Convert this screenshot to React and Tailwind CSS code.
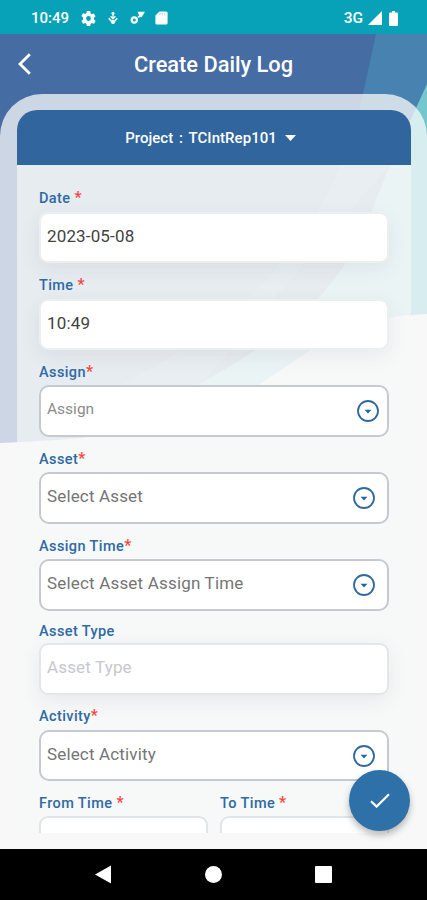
import React, { useState } from 'react';

const FIELDS = [
  {
    label: 'Date',
    required: true,
    spaced: true,
    value: '2023-05-08',
    kind: 'input',
    wrap: 'h-[87px]',
    labelBox: 'h-6',
    box: 'h-[51px] border-[#eceff0]',
    text: 'text-[17px] tracking-[0.15px] text-[#424242]',
  },
  {
    label: 'Time',
    required: true,
    spaced: true,
    value: '10:49',
    kind: 'input',
    wrap: 'h-[87px]',
    labelBox: 'h-6',
    box: 'h-[51px] border-[#eceff0]',
    text: 'text-[17px] tracking-[0.15px] text-[#424242]',
  },
  {
    label: 'Assign',
    required: true,
    value: 'Assign',
    kind: 'select',
    wrap: 'h-[87px]',
    labelBox: 'h-[23px]',
    box: 'h-[52px] pr-[8px]',
    text: 'text-[15.5px] text-[#8c8c8c]',
  },
  {
    label: 'Asset',
    required: true,
    value: 'Select Asset',
    kind: 'select',
    wrap: 'h-[87px]',
    labelBox: 'h-[23px]',
    box: 'h-[52px] pr-[12px]',
    text: 'text-[17px] tracking-[0.15px] text-[#757575]',
  },
  {
    label: 'Assign Time',
    required: true,
    value: 'Select Asset Assign Time',
    kind: 'select',
    wrap: 'h-[85px]',
    labelBox: 'h-[23px]',
    box: 'h-[52px] pr-[12px]',
    text: 'text-[17px] tracking-[0.18px] text-[#757575]',
  },
  {
    label: 'Asset Type',
    value: 'Asset Type',
    kind: 'input',
    wrap: 'h-[85px]',
    labelBox: 'h-[22px]',
    box: 'h-[52px] border-[#e4e7e9]',
    text: 'text-[17px] tracking-[0.15px] text-[#c6c8cc]',
  },
  {
    label: 'Activity',
    required: true,
    value: 'Select Activity',
    kind: 'select',
    wrap: 'h-[87px]',
    labelBox: 'h-[24px]',
    box: 'h-[51px] pr-[12px]',
    text: 'text-[17px] tracking-[0.15px] text-[#757575]',
  },
];

function StatusBar() {
  return (
    <div className="h-[34px] shrink-0 bg-[#07a2b8] flex items-center justify-between pl-[31px] pr-[29px] pt-[2px] text-white">
      <div className="flex items-center">
        <span className="w-[50px] text-[15px] leading-5 font-medium">10:49</span>
        <svg className="w-[15px] h-[15px]" viewBox="2 2 20 20" fill="currentColor" aria-hidden="true">
          <path d="M19.14 12.94c.04-.3.06-.61.06-.94s-.02-.64-.07-.94l2.03-1.58a.49.49 0 0 0 .12-.61l-1.92-3.32a.49.49 0 0 0-.59-.22l-2.39.96a7 7 0 0 0-1.62-.94l-.36-2.54A.48.48 0 0 0 13.92 2h-3.84a.48.48 0 0 0-.47.41l-.36 2.54a7.4 7.4 0 0 0-1.62.94l-2.39-.96a.48.48 0 0 0-.59.22L2.74 8.47a.48.48 0 0 0 .12.61l2.03 1.58a7.4 7.4 0 0 0 0 2.68l-2.03 1.58a.49.49 0 0 0-.12.61l1.92 3.32c.12.22.37.29.59.22l2.39-.96c.5.38 1.03.7 1.62.94l.36 2.54c.05.24.24.41.48.41h3.84c.24 0 .44-.17.47-.41l.36-2.54a7 7 0 0 0 1.62-.94l2.39.96c.22.08.47 0 .59-.22l1.92-3.32a.48.48 0 0 0-.12-.61zM12 15.2a3.2 3.2 0 1 1 0-6.4 3.2 3.2 0 0 1 0 6.4z" />
        </svg>
        <svg className="ml-[11px] w-[12px] h-[14px]" viewBox="0 0 12 14" fill="none" stroke="currentColor" strokeWidth="1.3" aria-hidden="true">
          <circle cx="6" cy="2.2" r="1.5" fill="currentColor" stroke="none" />
          <path d="M6 2v6M3.6 5.2 6 7.8l2.4-2.6" />
          <path d="M1.8 7.2 6 12l4.2-4.8" strokeWidth="1.6" />
          <circle cx="6" cy="11" r="2" fill="currentColor" stroke="none" />
        </svg>
        <svg className="ml-[11px] w-[15px] h-[14px]" viewBox="0 0 15 14" fill="currentColor" aria-hidden="true">
          <circle cx="4.3" cy="9" r="2.6" fill="none" stroke="currentColor" strokeWidth="2.2" />
          <path d="M7.6.8H15l-3.6 5.6-1.7-.9z" />
          <path d="m7.6 5.8 1.8-1.6 1.2 1.2-2 1.6z" />
        </svg>
        <svg className="ml-[10px] w-[13px] h-[14px]" viewBox="0 0 13 14" fill="currentColor" aria-hidden="true">
          <path d="M4.5.5H11a1.6 1.6 0 0 1 1.6 1.6v9.8a1.6 1.6 0 0 1-1.6 1.6H2A1.6 1.6 0 0 1 .4 11.9V4.6z" />
          <path d="M4.9 2.2v2M7.3 2.2v2M9.7 2.2v2" stroke="#07a2b8" strokeOpacity=".35" strokeWidth="1" />
        </svg>
      </div>
      <div className="flex items-center">
        <span className="text-[15.5px] leading-5 font-medium">3G</span>
        <svg className="ml-[5px] w-[14px] h-[14px]" viewBox="0 0 14 14" fill="currentColor" aria-hidden="true">
          <path d="M0 14 14 0v14z" />
        </svg>
        <svg className="ml-[7px] w-[9px] h-[15px]" viewBox="0 0 9 15" fill="currentColor" aria-hidden="true">
          <path d="M3 0h3v1.4h1.8A1.2 1.2 0 0 1 9 2.6v11.2A1.2 1.2 0 0 1 7.8 15H1.2A1.2 1.2 0 0 1 0 13.8V2.6a1.2 1.2 0 0 1 1.2-1.2H3z" />
        </svg>
      </div>
    </div>
  );
}

/**
 * Decorative backdrop behind the header and the rounded sheet.
 */
function Backdrop() {
  return (
    <svg className="absolute inset-0 w-full h-full" viewBox="0 34 427 815" preserveAspectRatio="none" aria-hidden="true">
      <rect x="0" y="34" width="427" height="815" fill="#f2f3f4" />
      <path d="M0 34H427V314C370 314 332 334 310 350L258 385C190 428 120 438 0 443Z" fill="#456ca3" />
      <path d="M376 34H427V90L390 165L200 385H120C290 300 345 180 363 94Z" fill="#4882b0" />
      <path d="M427 84V314C370 314 332 334 310 350L258 385H197C310 325 350 270 372 210L390 165Z" fill="#74c8cd" />
    </svg>
  );
}

function DropdownIcon() {
  return (
    <svg className="w-[22px] h-[22px]" viewBox="0 0 22 22" fill="none" aria-hidden="true">
      <circle cx="11" cy="11" r="10" stroke="#2f68a3" strokeWidth="1.8" />
      <path d="M7.5 9.8h7L11 13.4z" fill="#2565a3" />
    </svg>
  );
}

function FieldLabel({ label, required, spaced, className }) {
  return (
    <label className={`block text-[14.5px] leading-[22px] font-medium tracking-[0.4px] text-[#2e6aa3] ${className}`}>
      {label}
      {required && (
        <span className={`text-[16px] leading-none text-[#f5463f] ${spaced ? 'ml-[4px]' : ''}`}>*</span>
      )}
    </label>
  );
}

function Field({ field }) {
  const isSelect = field.kind === 'select';

  return (
    <div className={field.wrap}>
      <FieldLabel
        label={field.label}
        required={field.required}
        spaced={field.spaced}
        className={field.labelBox}
      />
      <div
        className={`flex items-center justify-between pl-[6px] bg-white border-2 ${field.box} ${
          isSelect
            ? 'rounded-[10px] border-[#c6cad0]'
            : 'rounded-[9px] shadow-[0_6px_20px_rgba(60,70,75,0.08)]'
        }`}
      >
        <span className={`pb-[4px] leading-5 ${field.text}`}>{field.value}</span>
        {isSelect && <DropdownIcon />}
      </div>
    </div>
  );
}

function App() {
  const [saved, setSaved] = useState(false);

  return (
    <div className="w-[427px] h-[900px] flex flex-col overflow-hidden bg-[#f7f8f8] font-['Roboto',sans-serif]">
      <StatusBar />

      <main className="relative flex-1 min-h-0 flex flex-col overflow-hidden">
        <Backdrop />

        <header className="relative h-[60px] shrink-0 grid grid-cols-[60px_1fr_60px] items-center">
          <button type="button" aria-label="Back" className="pl-[18px] text-white">
            <svg className="w-[13px] h-[22px]" viewBox="0 0 13 22" fill="none" stroke="currentColor" strokeWidth="2.8" aria-hidden="true">
              <path d="M11.8 1.2 2 11l9.8 9.8" />
            </svg>
          </button>
          <h1 className="pt-[2px] text-center text-[21.8px] leading-7 font-medium text-white">Create Daily Log</h1>
        </header>

        <div className="relative flex-1 min-h-0 rounded-t-[42px] bg-[#f9f9fa]/75 pl-[17px] pr-[16px] pt-4 pb-4">
          <div className="h-full flex flex-col overflow-hidden rounded-t-[20px] bg-[#f6f7f7]/65">
            <button
              type="button"
              className="h-[55px] shrink-0 w-full pr-[7px] pt-px bg-[#31659d] flex items-center justify-center gap-[8px] text-[15px] font-medium text-white"
            >
              <span className="tracking-[0.05px] [word-spacing:2px]">Project : TCIntRep101</span>
              <svg className="w-[11px] h-[6px]" viewBox="0 0 11 6" fill="currentColor" aria-hidden="true">
                <path d="M0 0h11L5.5 6z" />
              </svg>
            </button>

            <form className="px-[22px] pt-[23px]">
              {FIELDS.map((field) => (
                <Field key={field.label} field={field} />
              ))}
              <div className="grid grid-cols-2 gap-3">
                {['From Time', 'To Time'].map((label) => (
                  <div key={label}>
                    <FieldLabel label={label} required spaced className="h-[23px]" />
                    <div className="h-[51px] rounded-[9px] border-2 border-[#e2e5e7] bg-white" />
                  </div>
                ))}
              </div>
            </form>
          </div>
        </div>

        <button
          type="button"
          aria-label="Save"
          aria-pressed={saved}
          onClick={() => setSaved(!saved)}
          className="absolute right-[17px] bottom-[18px] size-[61px] rounded-full bg-[#2d71a8] flex items-center justify-center shadow-[0_4px_7px_rgba(0,0,0,0.28)]"
        >
          <svg className="w-[20px] h-[15px]" viewBox="0 0 20 15" fill="none" stroke="#fff" strokeWidth="2.2" aria-hidden="true">
            <path d="M1 8.2 6.6 13.6 19 1.2" />
          </svg>
        </button>
      </main>

      <nav className="h-[51px] shrink-0 bg-black flex items-center text-white pl-[94px]">
        <svg className="w-[17px] h-[19px]" viewBox="0 0 17 19" fill="currentColor" aria-hidden="true">
          <path d="M1 9.5 17 .5v18z" />
        </svg>
        <span className="ml-[94px] size-[17px] rounded-full bg-white" />
        <span className="ml-[93px] size-[17px] rounded-[1px] bg-white" />
      </nav>
    </div>
  );
}

export default App;
